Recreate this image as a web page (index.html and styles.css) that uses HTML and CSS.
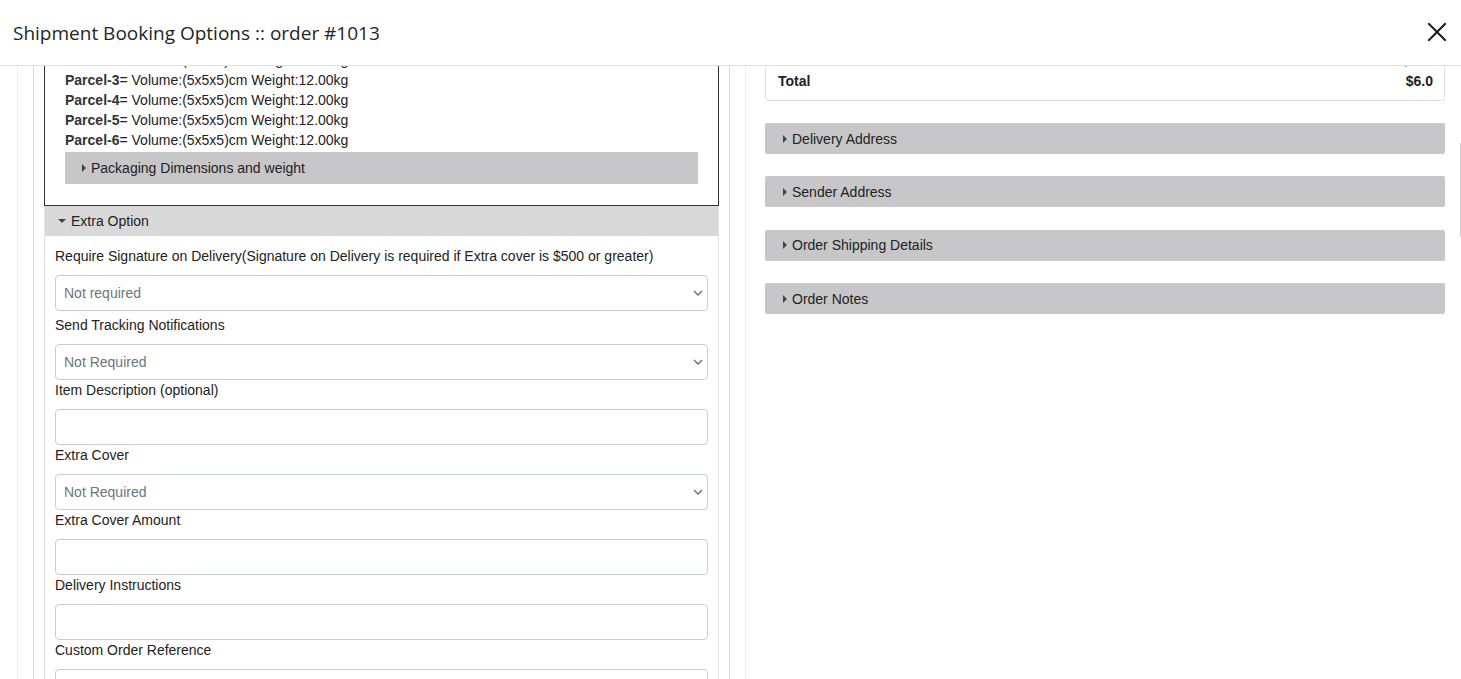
FILE: index.html
```html
<!DOCTYPE html>
<html lang="en">
<head>
<meta charset="utf-8">
<title>Shipment Booking Options</title>
<link rel="stylesheet" href="styles.css">
</head>
<body>
<div class="modal">
  <header class="modal-header">
    <h1 class="modal-title">Shipment Booking Options :: order #1013</h1>
    <button class="close-btn" type="button" aria-label="Close">
      <svg width="20" height="20" viewBox="0 0 20 20"><path d="M2 2 L18 18 M18 2 L2 18" stroke="#1a1a1a" stroke-width="2" fill="none" stroke-linecap="square"/></svg>
    </button>
  </header>
  <div class="modal-body">
    <div class="scroller">
      <div class="col-left">
        <div class="col-inner">
          <div class="parcel-box">
            <div class="parcel-line"><b>Parcel-2</b>= Volume:(5x5x5)cm Weight:12.00kg</div>
            <div class="parcel-line"><b>Parcel-3</b>= Volume:(5x5x5)cm Weight:12.00kg</div>
            <div class="parcel-line"><b>Parcel-4</b>= Volume:(5x5x5)cm Weight:12.00kg</div>
            <div class="parcel-line"><b>Parcel-5</b>= Volume:(5x5x5)cm Weight:12.00kg</div>
            <div class="parcel-line"><b>Parcel-6</b>= Volume:(5x5x5)cm Weight:12.00kg</div>
            <div class="pack-bar"><span class="tri-right"></span>Packaging Dimensions and weight</div>
          </div>
          <div class="extra">
            <div class="extra-head"><span class="tri-down"></span>Extra Option</div>
            <div class="extra-body">
              <label class="field-label">Require Signature on Delivery(Signature on Delivery is required if Extra cover is $500 or greater)</label>
              <div class="select-wrap first">
                <div class="control select">Not required</div>
                <svg class="chev" width="10" height="6" viewBox="0 0 10 6"><path d="M1 1 L5 5 L9 1" stroke="#6c757d" stroke-width="1.5" fill="none"/></svg>
              </div>
              <label class="field-label">Send Tracking Notifications</label>
              <div class="select-wrap">
                <div class="control select">Not Required</div>
                <svg class="chev" width="10" height="6" viewBox="0 0 10 6"><path d="M1 1 L5 5 L9 1" stroke="#6c757d" stroke-width="1.5" fill="none"/></svg>
              </div>
              <label class="field-label">Item Description (optional)</label>
              <div class="control input"></div>
              <label class="field-label">Extra Cover</label>
              <div class="select-wrap">
                <div class="control select">Not Required</div>
                <svg class="chev" width="10" height="6" viewBox="0 0 10 6"><path d="M1 1 L5 5 L9 1" stroke="#6c757d" stroke-width="1.5" fill="none"/></svg>
              </div>
              <label class="field-label">Extra Cover Amount</label>
              <div class="control input"></div>
              <label class="field-label">Delivery Instructions</label>
              <div class="control input"></div>
              <label class="field-label">Custom Order Reference</label>
              <div class="control input"></div>
            </div>
          </div>
        </div>
      </div>
      <div class="col-right">
        <div class="totals">
          <div class="tot-row"><span>Tax</span><span>$ 0.0</span></div>
          <div class="tot-row total"><span>Total</span><span>$6.0</span></div>
        </div>
        <div class="acc-bar"><span class="tri-right"></span>Delivery Address</div>
        <div class="acc-bar"><span class="tri-right"></span>Sender Address</div>
        <div class="acc-bar"><span class="tri-right"></span>Order Shipping Details</div>
        <div class="acc-bar"><span class="tri-right"></span>Order Notes</div>
      </div>
    </div>
  </div>
  <div class="scroll-thumb"></div>
</div>
</body>
</html>
```
FILE: styles.css
```css
* { box-sizing: border-box; }
html, body { margin: 0; padding: 0; background: #fff; }
body {
  font-family: "Liberation Sans", Arial, sans-serif;
  font-size: 14px;
  color: #212529;
  width: 1461px;
  height: 679px;
  overflow: hidden;
}
.modal {
  position: relative;
  width: 1461px;
  height: 679px;
  display: flex;
  flex-direction: column;
  overflow: hidden;
}
.modal-header {
  height: 66px;
  flex: 0 0 66px;
  border-bottom: 1px solid #dee2e6;
  display: flex;
  align-items: center;
  justify-content: space-between;
  padding: 0 12px 0 13px;
  background: #fff;
  position: relative;
  z-index: 2;
}
.modal-title {
  margin: 0;
  font-family: "Open Sans", "Noto Sans", sans-serif;
  font-weight: 400;
  font-size: 19px;
  color: #212529;
  padding-top: 1px;
}
.close-btn {
  border: 0;
  background: transparent;
  padding: 0;
  width: 20px;
  height: 20px;
  margin-right: 2px;
  margin-top: -1px;
  display: flex;
}
.modal-body {
  flex: 1 1 auto;
  overflow: hidden;
  padding-left: 17px;
}
.scroller {
  display: flex;
  align-items: stretch;
  margin-top: -40px;
  min-height: 800px;
}
.col-left {
  width: 729px;
  flex: 0 0 729px;
  border-left: 1px solid #ececec;
  border-right: 1px solid #ececec;
  padding: 0 15px;
}
.col-inner {
  height: 100%;
  border-left: 1px solid #dcdcdc;
  border-right: 1px solid #dcdcdc;
  padding: 0 10px;
}
.parcel-box {
  border: 1px solid #333;
  padding: 23px 20px 21px 20px;
}
.parcel-line {
  line-height: 20px;
  color: #222;
}
.parcel-line b { font-weight: 700; color: #333; }
.pack-bar {
  margin-top: 2px;
  height: 32px;
  background: #c7c7c9;
  display: flex;
  align-items: center;
  padding-left: 17px;
  color: #222;
}
.tri-right {
  display: inline-block;
  width: 0;
  height: 0;
  border-top: 4px solid transparent;
  border-bottom: 4px solid transparent;
  border-left: 4px solid #444;
  margin-right: 5px;
}
.tri-down {
  display: inline-block;
  width: 0;
  height: 0;
  border-left: 4px solid transparent;
  border-right: 4px solid transparent;
  border-top: 4px solid #444;
  margin-right: 5px;
}
.extra {
  border: 1px solid #e2e2e2;
  border-top: 0;
}
.extra-head {
  height: 30px;
  background: #d9d9d9;
  display: flex;
  align-items: center;
  padding-left: 13px;
  color: #222;
}
.extra-body {
  padding: 10px 10px 10px 10px;
}
.field-label {
  display: block;
  line-height: 20px;
  margin-bottom: 9px;
  color: #222;
}
.control {
  height: 36px;
  border: 1px solid #c8ced6;
  border-radius: 4px;
  background: #fff;
  color: #6c757d;
  padding: 0 8px;
  display: flex;
  align-items: center;
}
.select-wrap { position: relative; }
.select-wrap.first { margin-bottom: 4px; }
.chev {
  position: absolute;
  right: 5px;
  top: 15px;
}
.col-right {
  flex: 1 1 auto;
  padding: 0 16px 0 19px;
}
.totals {
  border: 1px solid #e0e0e0;
  border-top: 0;
  border-radius: 0 0 4px 4px;
  padding: 25px 11px 9px 12px;
  margin-bottom: 22px;
}
.tot-row {
  display: flex;
  justify-content: space-between;
  line-height: 20px;
  color: #333;
}
.tot-row.total { font-weight: 700; color: #222; }
.acc-bar {
  height: 31px;
  background: #c7c7c9;
  border-radius: 2px;
  display: flex;
  align-items: center;
  padding-left: 18px;
  margin-bottom: 22.4px;
  color: #222;
}
.scroll-thumb {
  position: absolute;
  right: 0;
  top: 143px;
  width: 1px;
  height: 94px;
  background: #d0d0d0;
}
```
